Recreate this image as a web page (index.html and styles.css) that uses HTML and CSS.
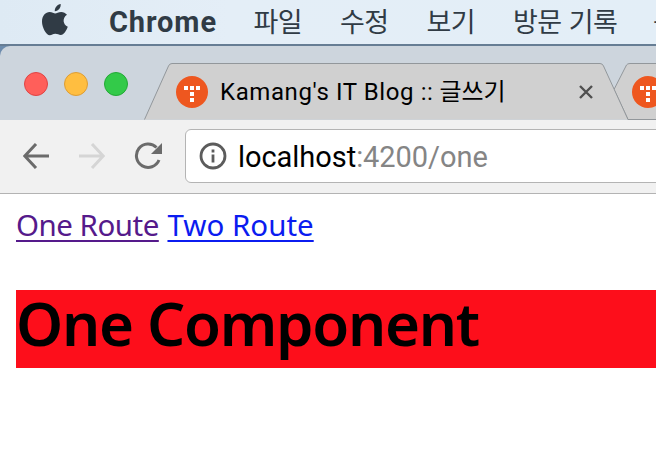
FILE: index.html
```html
<!DOCTYPE html>
<html lang="ko">
<head>
<meta charset="utf-8">
<title>One Component</title>
<link rel="stylesheet" href="styles.css">
</head>
<body>
<nav class="menubar">
  <svg class="apple" width="26" height="32" viewBox="0 0 26 32"><path d="M18.7 0C19 3.6 16.6 7.2 12.8 7.2C12.5 3.8 15.4 .3 18.7 0ZM13.2 9.4C14.6 9.4 16.4 7.9 19.3 7.9C21.4 7.9 23.6 8.9 25 10.8C20 13.9 20.8 20.8 25.8 22.7C24.6 26 21.8 31 18.8 31C16.7 31 15.8 29.8 13.3 29.8C10.7 29.8 9.9 31.2 7.8 31.2C4.3 31.2 0 23.6 0 17.7C0 11.5 3.7 8 7.6 8C10.1 8 12 9.4 13.2 9.4Z"/></svg>
  <b class="app">Chrome</b>
  <span class="menu">파일</span>
  <span class="menu">수정</span>
  <span class="menu">보기</span>
  <span class="menu history">방문 기록</span>
  <span class="menu">북마크</span>
</nav>
<div class="window">
  <header class="tabstrip">
    <div class="lights"><i class="light red"></i><i class="light yellow"></i><i class="light green"></i></div>
    <div class="tab">
      <svg class="shape" width="512" height="57" viewBox="0 0 512 57">
        <path d="M470 26.500L482.500 2Q483.500 .5 486 .5H520V56.500H484Z"/>
        <path d="M.5 56.500L24.500 3Q25.500 .5 28 .5H456Q458.500 .5 459.500 3L484 56.500"/>
      </svg>
      <svg class="favicon" width="32" height="32" viewBox="0 0 32 32"><circle cx="16" cy="16" r="16"/><path d="M8 10h4v4H8zM14 10h4v4h-4zM20 10h4v4h-4zM14 16h4v4h-4zM14 22h4v4h-4z"/></svg>
      <span class="title"><span class="latin">Kamang's IT Blog ::</span> 글쓰기</span>
      <svg class="close" width="14" height="14" viewBox="0 0 14 14"><path d="M1 1L13 13M13 1L1 13"/></svg>
      <svg class="favicon" width="32" height="32" viewBox="0 0 32 32"><circle cx="16" cy="16" r="16"/><path d="M8 10h4v4H8zM14 10h4v4h-4zM20 10h4v4h-4zM14 16h4v4h-4zM14 22h4v4h-4z"/></svg>
    </div>
  </header>
  <div class="toolbar">
    <svg class="nav back" width="26" height="26" viewBox="0 0 26 26"><path d="M26 13H2M13 1L1.800 13L13 25"/></svg>
    <svg class="nav forward" width="26" height="26" viewBox="0 0 26 26"><path d="M0 13H24M13 1L24.200 13L13 25"/></svg>
    <svg class="nav reload" width="28" height="28" viewBox="0 0 28 28"><path d="M22.500 5.500A11.700 11.700 0 1 0 25 18"/><path class="tip" d="M28 1V12H17Z"/></svg>
    <div class="address">
      <svg width="28" height="28" viewBox="0 0 28 28"><circle cx="14" cy="14" r="12"/><path d="M14 12.500V20.500M14 7.500V10.500"/></svg>
      <span class="url">localhost<span class="path">:4200/one</span></span>
    </div>
  </div>
  <main class="page">
    <div class="links"><a class="visited" href="#one">One Route</a> <a class="second" href="#two">Two Route</a></div>
    <h1>One Component</h1>
  </main>
</div>
</body>
</html>
```
FILE: styles.css
```css
* { box-sizing: border-box; }
html, body { margin: 0; height: 476px; overflow: hidden; }
body { background: #6d8cad; font-family: Roboto, "Noto Sans CJK KR", sans-serif; }
.menubar {
  display: flex; align-items: center; height: 46px; padding: 0 0 2px 42px;
  background: linear-gradient(90deg, #deeaf4, #e4eef7 35%, #e3eef7);
  border-bottom: 2px solid #667d94; color: #303b45; white-space: nowrap; overflow: hidden;
}
.apple { flex: none; fill: #303b45; margin: -3px 41px 0 0; }
.app { flex: none; width: 144.500px; padding-top: 2px; font-size: 29px; line-height: 40px; letter-spacing: .9px; }
.menu { flex: none; width: 86.500px; font: 27px/40px "Noto Sans CJK KR", sans-serif; letter-spacing: -.5px; }
.history { width: 140px; }
.window { height: 430px; border-radius: 10px 0 0; overflow: hidden; background: #cdd5dd; }
.tabstrip { display: flex; height: 74px; padding: 17px 0 0 24px; }
.lights { display: flex; flex: none; gap: 16px; width: 120px; padding-top: 9px; }
.light { width: 24px; height: 24px; border-radius: 50%; border: 1px solid; }
.red { background: #ff5f5a; border-color: #df4444; }
.yellow { background: #ffbe40; border-color: #dd9d35; }
.green { background: #33ca49; border-color: #23a936; }
.tab { position: relative; display: flex; align-items: center; flex: none; width: 512px; padding-left: 32px; }
.shape { position: absolute; inset: 0; fill: #d0d0d0; stroke: #92979b; }
.favicon { position: relative; flex: none; fill: #ee571f; }
.favicon path { fill: #fff; }
.title { position: relative; flex: none; width: 371px; padding-left: 12px; font-size: 24px; line-height: 36px; white-space: nowrap; color: #000; }
.latin { letter-spacing: .6px; }
.close { position: relative; flex: none; margin-right: 39px; stroke: #505050; stroke-width: 2.400; }
.toolbar { display: flex; align-items: center; height: 74px; padding: 0 0 2px 23px; background: #f1f1f1; border-bottom: 1px solid #b3b3b3; }
.nav { flex: none; fill: none; stroke: #6b6b6b; stroke-width: 3; }
.back { margin-right: 30px; }
.forward { margin-right: 29px; stroke: #d5d5d5; }
.reload { margin-right: 23px; }
.reload .tip { fill: #6b6b6b; stroke: none; }
.address { display: flex; align-items: center; flex: none; width: 490px; height: 54px; padding-left: 13px; background: #fff; border: 1px solid #b4b4b4; border-radius: 6px; }
.address svg { flex: none; fill: none; stroke: #5c5c5c; stroke-width: 2.800; }
.url { margin-left: 11px; padding-top: 3px; font-size: 29px; line-height: 40px; letter-spacing: -.05px; color: #000; white-space: nowrap; }
.path { color: #858585; }
.page { height: 282px; padding: 11px 0 0 16px; background: #fff; font-family: "Noto Sans", sans-serif; }
.links { height: 85px; font-size: 29.500px; line-height: 40px; letter-spacing: -.5px; white-space: nowrap; }
.links a { color: #0b1cf0; text-decoration: underline; text-decoration-thickness: 2px; text-decoration-skip-ink: none; text-underline-offset: 4px; }
.links .visited { color: #551a8b; }
.links .second { margin-left: 1.500px; letter-spacing: 0; }
h1 { margin: 0; height: 78px; background: #fd0e1b; color: #000; font-size: 60px; line-height: 67px; font-weight: 600; letter-spacing: -1.300px; white-space: nowrap; }
```
